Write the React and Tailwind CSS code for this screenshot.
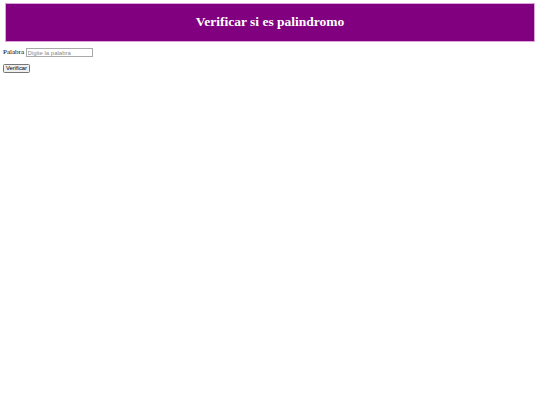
export default function App() {
  return (
    <div className="min-h-[405px] bg-white px-[3px] pt-[3px] font-['Liberation_Serif',serif] text-black">
      <h1 className="mx-[2px] flex h-[39px] items-center justify-center border border-[#dca6dc] bg-[#800080] text-[13.5px] font-bold text-white">
        Verificar si es palindromo
      </h1>
      <div className="mt-[6px] flex items-center gap-[1.5px] text-[7px] leading-none">
        <label htmlFor="palabra" className="font-normal">Palabra</label>
        <input
          id="palabra"
          type="text"
          placeholder="Digite la palabra"
          className="h-[9px] w-[67px] border border-[#a9a9a9] bg-white px-[1px] font-['Liberation_Sans',sans-serif] text-[6px] outline-none placeholder:text-[#8a8a8a]"
        />
      </div>
      <button className="mt-[7px] flex h-[9px] w-[27px] items-center justify-center rounded-[1.5px] border border-[#767676] bg-[#efefef] font-['Liberation_Sans',sans-serif] text-[5.8px] leading-none">
        Verificar
      </button>
    </div>
  );
}
